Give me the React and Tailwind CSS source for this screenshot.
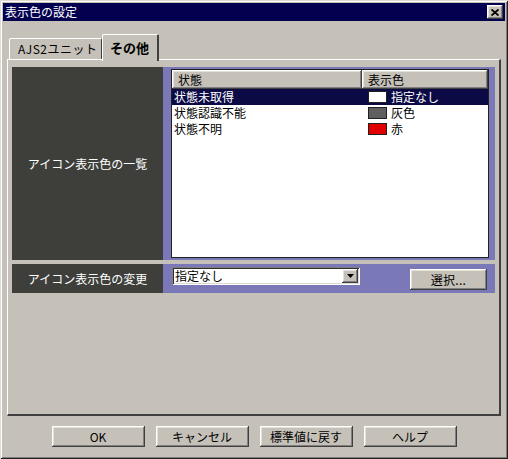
import React from 'react';

const raised =
  'shadow-[inset_-1px_-1px_#404040,inset_1px_1px_#ffffff,inset_-2px_-2px_#808080,inset_2px_2px_#e4e1da]';
const sunken =
  'shadow-[inset_1px_1px_#808080,inset_-1px_-1px_#ffffff,inset_2px_2px_#303030,inset_-2px_-2px_#dcd9d2]';

const rows = [
  { name: '状態未取得', color: 'bg-white', label: '指定なし', selected: true },
  { name: '状態認識不能', color: 'bg-[#5f5f5f]', label: '灰色' },
  { name: '状態不明', color: 'bg-[#e00000]', label: '赤' },
];

const Button = ({ children, className = '' }) => (
  <button className={`h-[21px] bg-[#c5c1b9] text-[12px] text-black ${raised} ${className}`}>
    {children}
  </button>
);

export default function App() {
  return (
    <div className="w-[508px] h-[459px] bg-[#c5c1b9] font-['Noto_Sans_CJK_JP','Noto_Sans',sans-serif] text-[12px] leading-none select-none">
      {/* window frame */}
      <div className="w-full h-full p-[3px] shadow-[inset_1px_1px_#dedbd4,inset_-1px_-1px_#202020,inset_2px_2px_#ffffff,inset_-2px_-2px_#808080] flex flex-col">
        {/* title bar */}
        <div className="h-[18px] shrink-0 bg-[#03014f] flex items-center justify-between pl-[2px] pr-[2px]">
          <span className="text-white text-[12px]">表示色の設定</span>
          <div className={`w-[16px] h-[14px] bg-[#c5c1b9] flex items-center justify-center ${raised}`}>
            <svg width="8" height="7" viewBox="0 0 8 7">
              <path d="M0.5 0.5 L7.5 6.5 M7.5 0.5 L0.5 6.5" stroke="#000" strokeWidth="1.8" />
            </svg>
          </div>
        </div>

        {/* tabs */}
        <div className="h-[38px] shrink-0 flex items-end pl-[6px]">
          <div className="h-[21px] w-[93px] flex items-center pl-[8px] border-l border-t border-white border-r border-r-[#404040] rounded-t-[2px] text-[12px] tracking-[0.5px]">
            AJS2ユニット
          </div>
          <div className="relative z-10 -mb-[2px] h-[27px] w-[57px] flex items-start pt-[6px] pl-[7px] bg-[#c5c1b9] border-l border-t border-white border-r-2 border-r-[#404040] rounded-t-[2px] font-bold text-[13px]">
            その他
          </div>
        </div>

        {/* tab panel */}
        <div className="shrink-0 ml-[4px] w-[494px] h-[357px] border-l border-t border-white border-r-2 border-b-2 border-r-[#404040] border-b-[#404040] pt-[7px] px-[4px] flex flex-col gap-[4px]">
          <div className="flex h-[193px]">
            <div className="w-[151px] bg-[#3e3f3b] flex items-center justify-center text-white text-[12px]">
              アイコン表示色の一覧
            </div>
            <div className="flex-1 bg-[#7b78b7] pl-[8px] pr-[6px] py-[2px]">
              <div className="h-full bg-white border border-[#202020] flex flex-col">
                <div className="flex h-[19px] shrink-0 bg-[#c5c1b9]">
                  <div className={`w-[190px] flex items-center pl-[6px] ${raised}`}>状態</div>
                  <div className={`flex-1 flex items-center pl-[6px] ${raised}`}>表示色</div>
                </div>
                {rows.map((r) => (
                  <div
                    key={r.name}
                    className={`flex h-[16px] shrink-0 items-center ${r.selected ? 'bg-[#0b0a45] text-white' : 'text-black'}`}
                  >
                    <div className="w-[190px] pl-[2px]">{r.name}</div>
                    <div className="flex items-center pl-[6px] gap-[4px]">
                      <span className={`w-[19px] h-[12px] border border-[#202020] ${r.color}`} />
                      <span>{r.label}</span>
                    </div>
                  </div>
                ))}
              </div>
            </div>
          </div>

          <div className="flex h-[29px]">
            <div className="w-[151px] bg-[#3e3f3b] flex items-center justify-center text-white text-[12px]">
              アイコン表示色の変更
            </div>
            <div className="flex-1 bg-[#7b78b7] flex items-start pl-[9px] pr-[8px]">
              <div className={`mt-[3px] w-[188px] h-[18px] bg-white flex items-center justify-between pl-[3px] pr-[2px] ${sunken}`}>
                <span>指定なし</span>
                <div className={`w-[16px] h-[14px] bg-[#c5c1b9] flex items-center justify-center ${raised}`}>
                  <svg width="7" height="4" viewBox="0 0 7 4">
                    <path d="M0 0 H7 L3.5 4 Z" fill="#000" />
                  </svg>
                </div>
              </div>
              <Button className="ml-auto mt-[5px] w-[77px] bg-[#bcb8b2] tracking-wide">選択...</Button>
            </div>
          </div>
        </div>

        {/* bottom buttons */}
        <div className="flex justify-center gap-[11px] mt-[10px]">
          <Button className="w-[93px]">OK</Button>
          <Button className="w-[93px]">キャンセル</Button>
          <Button className="w-[93px]">標準値に戻す</Button>
          <Button className="w-[93px]">ヘルプ</Button>
        </div>
      </div>
    </div>
  );
}
